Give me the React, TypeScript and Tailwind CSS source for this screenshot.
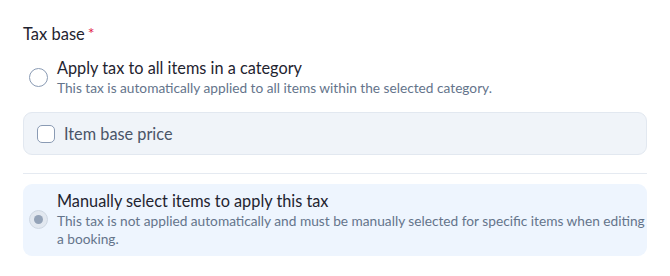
import React from "react";

export default function App() {
  return (
    <div className="w-[670px] h-[276px] bg-white px-[23px] pt-[24px]" style={{ fontFamily: "Lato, 'Noto Sans', sans-serif" }}>
      <div className="flex items-start text-[16.5px] leading-[20px] text-[#1f2430]">
        Tax base<span className="text-[#e11d48] text-[16px] leading-[18px] ml-[3px]">*</span>
      </div>

      <div className="flex items-center mt-[14px] pl-[6px]">
        <div className="w-[19px] h-[19px] rounded-full border-[1.5px] border-[#8a9bb4] bg-white shrink-0" />
        <div className="ml-[9px]">
          <div className="text-[16.3px] leading-[20px] text-[#1f2430]">Apply tax to all items in a category</div>
          <div className="text-[13.7px] leading-[18px] text-[#64748b] mt-[1px]">This tax is automatically applied to all items within the selected category.</div>
        </div>
      </div>

      <div className="mt-[15px] h-[43px] rounded-[9px] bg-[#f0f4f9] border border-[#e2e8f0] flex items-center pl-[13px]">
        <div className="w-[18px] h-[18px] rounded-[5px] border-[1.5px] border-[#8a9bb4] bg-white shrink-0" />
        <div className="ml-[9px] text-[16.3px] leading-[20px] text-[#4a5568]">Item base price</div>
      </div>

      <div className="mt-[18px] h-px bg-[#e5eaf1]" />

      <div className="mt-[10px] rounded-[9px] bg-[#eef5fe] flex items-center pl-[6px] pr-[2px] pt-[7px] pb-[8px]">
        <div className="w-[19px] h-[19px] rounded-full bg-[#e2e8f0] border border-[#cfd8e3] flex items-center justify-center shrink-0">
          <div className="w-[9px] h-[9px] rounded-full bg-[#94a3b8]" />
        </div>
        <div className="ml-[9px]">
          <div className="text-[16.3px] leading-[20px] text-[#1f2430]">Manually select items to apply this tax</div>
          <div className="text-[13.7px] leading-[18px] text-[#64748b] mt-[1px]">This tax is not applied automatically and must be manually selected for specific items when editing a booking.</div>
        </div>
      </div>
    </div>
  );
}
